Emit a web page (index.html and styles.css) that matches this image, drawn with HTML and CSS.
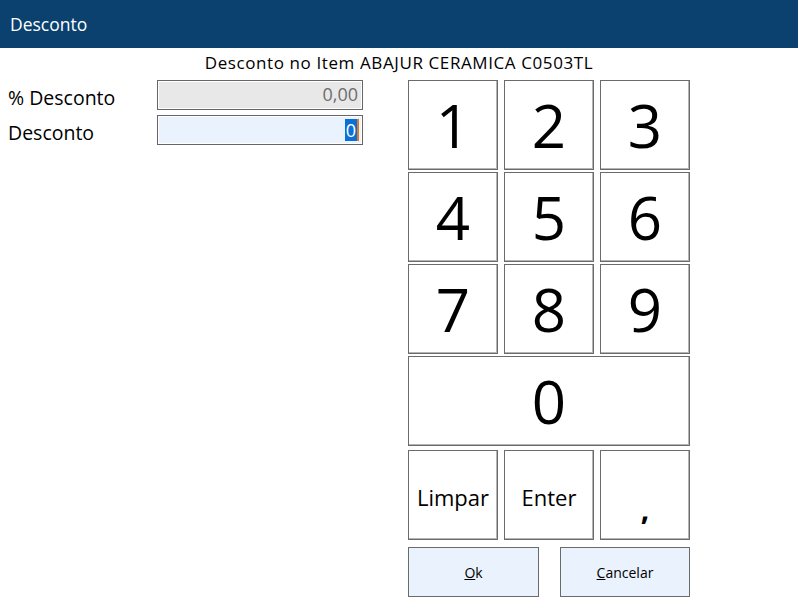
FILE: index.html
```html
<!DOCTYPE html>
<html lang="pt">
<head>
<meta charset="utf-8">
<title>Desconto</title>
<link rel="stylesheet" href="styles.css">
</head>
<body>
<header class="titlebar">Desconto</header>
<div class="subtitle">Desconto no Item ABAJUR CERAMICA C0503TL</div>
<main class="content">
  <section class="form">
    <div class="row">
      <label class="label">% Desconto</label>
      <div class="field field-disabled">0,00</div>
    </div>
    <div class="row">
      <label class="label">Desconto</label>
      <div class="field field-active"><span class="sel">0</span><span class="caret"></span></div>
    </div>
  </section>
  <section class="pad">
    <div class="keys">
      <button class="key">1</button>
      <button class="key">2</button>
      <button class="key">3</button>
      <button class="key">4</button>
      <button class="key">5</button>
      <button class="key">6</button>
      <button class="key">7</button>
      <button class="key">8</button>
      <button class="key">9</button>
      <button class="key key-wide">0</button>
      <button class="key key-text key-last">Limpar</button>
      <button class="key key-text key-last">Enter</button>
      <button class="key key-text key-last key-comma">,</button>
    </div>
    <div class="actions">
      <button class="act act-ok"><u>O</u>k</button>
      <button class="act act-cancel"><u>C</u>ancelar</button>
    </div>
  </section>
</main>
</body>
</html>
```
FILE: styles.css
```css
* { box-sizing: border-box; }
html, body { margin: 0; padding: 0; background: #fff; }
body {
  width: 798px;
  height: 599px;
  overflow: hidden;
  font-family: "Open Sans", "Noto Sans", sans-serif;
  color: #000;
}
.titlebar {
  height: 48px;
  background: #0a416f;
  color: #fff;
  font-size: 17.5px;
  line-height: 48px;
  padding-left: 10px;
}
.subtitle {
  text-align: center;
  font-size: 17px;
  line-height: 20px;
  height: 32px;
  padding-top: 5px;
  letter-spacing: 0.6px;
}
.content {
  display: flex;
}
.form {
  width: 408px;
  padding-left: 8px;
  display: flex;
  flex-direction: column;
  gap: 5px;
}
.row {
  display: flex;
  align-items: center;
  height: 30px;
}
.label {
  width: 149px;
  font-size: 19.5px;
  padding-top: 5px;
}
.field {
  width: 206px;
  height: 30px;
  border: 1px solid #666;
  box-shadow: inset 0 0 0 1px #fff;
  font-size: 18px;
  text-align: right;
  padding-right: 4px;
  line-height: 27px;
}
.field-disabled {
  background: #e8e8e8;
  color: #6d6d6d;
}
.field-active {
  background: #eaf2fe;
  display: flex;
  justify-content: flex-end;
  align-items: center;
  padding-right: 3px;
}
.sel {
  background: #0a6fd6;
  color: #fff;
  line-height: 22px;
  height: 22px;
  padding: 0 1px;
}
.caret {
  width: 2px;
  height: 22px;
  background: #e07a1a;
}
.pad {
  width: 282px;
}
.keys {
  display: grid;
  grid-template-columns: repeat(3, 90px);
  grid-template-rows: repeat(4, 90px) 92px;
  column-gap: 6px;
  row-gap: 2px;
}
.key {
  margin: 0;
  padding: 0;
  background: #fff;
  border: 1px solid #6b6b6b;
  box-shadow: inset -1px -1px 0 #b4b4b4;
  font-family: "Open Sans", "Noto Sans", sans-serif;
  font-size: 60px;
  font-weight: 400;
  color: #000;
  line-height: 1;
}
.key-wide {
  grid-column: 1 / span 3;
}
.key-last {
  margin-top: 2px;
}
.key-text {
  font-size: 22px;
  padding-top: 3px;
}
.key-comma {
  font-size: 30px;
  font-weight: 700;
  padding-top: 28px;
}
.actions {
  display: flex;
  justify-content: space-between;
  margin-top: 7px;
  width: 282px;
}
.act {
  height: 50px;
  margin: 0;
  background: #eaf2fe;
  border: 1px solid #6b6b6b;
  font-family: "Open Sans", "Noto Sans", sans-serif;
  font-size: 14px;
  color: #000;
}
.act-ok { width: 131px; }
.act-cancel { width: 130px; }
```
